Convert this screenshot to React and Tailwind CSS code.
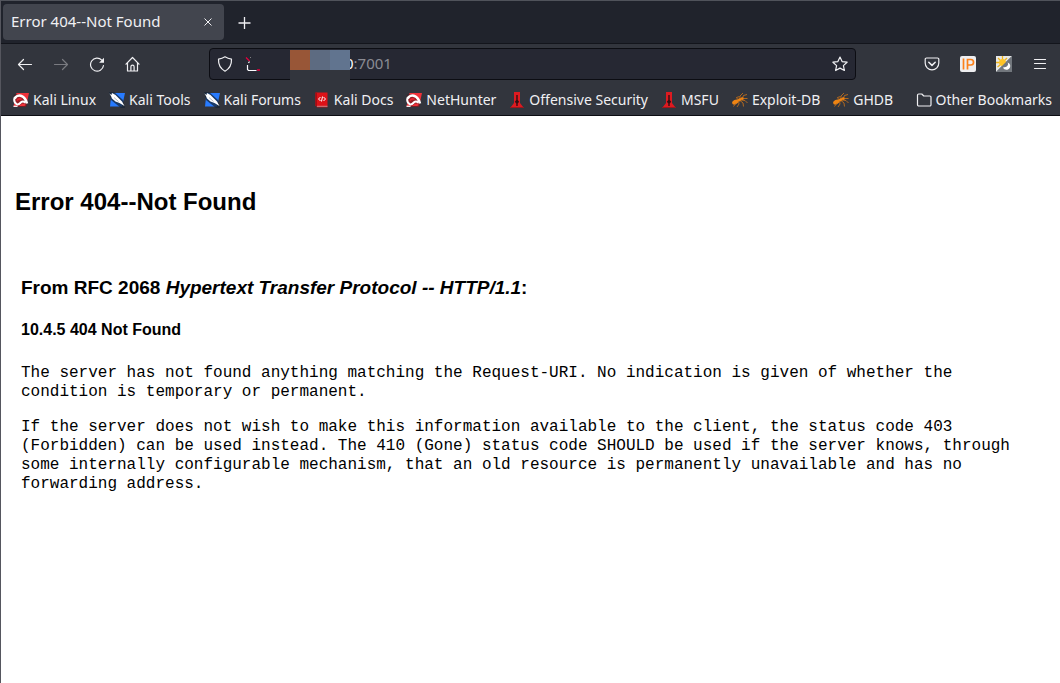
function Line({ children, className = 'size-4', box = '0 0 16 16' }) {
  return (
    <svg
      viewBox={box}
      className={className}
      fill="none"
      stroke="currentColor"
      strokeWidth="1.2"
      strokeLinecap="round"
      strokeLinejoin="round"
      aria-hidden="true"
    >
      {children}
    </svg>
  )
}

function MagnetIcon() {
  return (
    <svg viewBox="0 0 16 16" className="size-4 shrink-0" aria-hidden="true">
      <path d="M3.500 1H16l-3 13.500H.5z" fill="#f0323a" />
      <path d="M1 2.500 6 2l7 5 1.500 5-1.500 3H5L0 10z" fill="#4a1218" opacity=".55" />
      <path d="M1.600 6.500C3 4 6 3 8.500 4c3 1.100 4.500 3.800 5.500 7.500" fill="none" stroke="#fff" strokeWidth="2.600" />
      <path d="M1.500 6C.8 8.500 1.500 11 4 12.300c1.800.8 2.800-.9 4-2 1.500-1.300 3-.8 4.300.4" fill="none" stroke="#fff" strokeWidth="2" />
      <path d="M4 8.600c1-1.600 3-2 4.600-1.200" fill="none" stroke="#e8252f" strokeWidth="1.600" />
      <path d="M5.500 14h6l1-2-3-.5z" fill="#f0323a" />
      <path d="M.5 14.300h4" stroke="#fff" strokeWidth="1.200" />
    </svg>
  )
}

function ToolIcon() {
  return (
    <svg viewBox="0 0 16 16" className="size-4 shrink-0" aria-hidden="true">
      <path d="M2.500 1H16l-3 13.500H1z" fill="#277bff" />
      <path d="M0 0h5l9 8 2 8h-4L2 8z" fill="#182536" opacity=".75" />
      <path d="M.3 1.500 2.500 3l.5-2 3.500 2 3 3 3.500 3.500 2.500 4.500-5-3-4-1.500-3.500-3-1-2.500z" fill="#fff" />
      <path d="m5 5.500 4.500 4" stroke="#8696aa" strokeWidth=".7" />
    </svg>
  )
}

function DocsIcon() {
  return (
    <svg viewBox="0 0 16 16" className="size-4 shrink-0" aria-hidden="true">
      <path d="M1.500.5h12V14h-12z" fill="#dc1218" />
      <path d="M1.500.5H3V14H1.500z" fill="#a90b12" />
      <path d="M2 14h11.500v1.500H3z" fill="#a51a20" />
      <path d="M3 14.300h10.500" stroke="#e6c8ca" strokeWidth=".6" />
      <path d="M6.500 5 4.500 7l2 2M9.500 5l2 2-2 2M8.500 4.500 7.500 9.500" fill="none" stroke="#fff" strokeWidth="1" />
    </svg>
  )
}

function SpikeIcon() {
  return (
    <svg viewBox="0 0 16 16" className="size-4 shrink-0" aria-hidden="true">
      <path d="M5 0h6v11l3.500 4.500v.5h-13v-.5L5 11z" fill="#dd1a20" />
      <path d="M7.300 3h1.400v5l1.500 1.800-1.500 1.700V14H7.300v-2.500L5.800 9.800 7.300 8z" fill="#310f12" />
      <path d="M1.500 15.500h13" stroke="#9d171c" />
    </svg>
  )
}

function AntIcon() {
  return (
    <svg viewBox="0 0 16 16" className="size-4 shrink-0" aria-hidden="true">
      <g fill="#ee8413">
        <ellipse cx="3.300" cy="10" rx="3.300" ry="2.200" transform="rotate(-25 3.300 10)" />
        <ellipse cx="7.500" cy="7.800" rx="2.300" ry="1.500" transform="rotate(-25 7.500 7.800)" />
        <circle cx="10.300" cy="6.500" r="1.500" />
      </g>
      <path
        d="M6 8 4.500 5.500l3-1M8 7V4l3-3M10.500 6l1-2.500L15 2.500M11 6.500h4.500M9 8l4 .5 2.500 2.500M8 8.500l3 2.500.5 3.500M6.500 9 7 12l-2 3M4 11l-2.500 3.500"
        fill="none"
        stroke="#cf7518"
        strokeWidth=".8"
      />
    </svg>
  )
}

const BOOKMARKS = [
  ['Kali Linux', MagnetIcon],
  ['Kali Tools', ToolIcon],
  ['Kali Forums', ToolIcon],
  ['Kali Docs', DocsIcon],
  ['NetHunter', MagnetIcon],
  ['Offensive Security', SpikeIcon],
  ['MSFU', SpikeIcon],
  ['Exploit-DB', AntIcon],
  ['GHDB', AntIcon],
]

function TabStrip() {
  return (
    <div className="flex h-11 items-center border-y border-t-[#50535b] border-b-[#13151c] bg-[#20232c] pl-0.5">
      <div className="flex h-9 w-[221px] items-center justify-between rounded bg-[#42454e] pl-2 pr-2.5">
        <span className="text-[15px]">Error 404--Not Found</span>
        <button type="button" aria-label="Close tab">
          <svg viewBox="0 0 12 12" className="size-3" fill="none" stroke="currentColor" aria-hidden="true">
            <path d="m2.500 2.500 7 7M9.500 2.500l-7 7" />
          </svg>
        </button>
      </div>
      <button type="button" aria-label="New tab" className="ml-3">
        <svg viewBox="0 0 17 17" className="size-[17px]" fill="none" stroke="currentColor" aria-hidden="true">
          <path d="M8.500 3v12M2.500 9h12" strokeWidth="1.300" />
        </svg>
      </button>
    </div>
  )
}

function AddressBar() {
  return (
    <div className="relative ml-[68px] flex h-8 min-w-0 flex-1 items-center rounded border border-[#0c0d13] bg-[#262833] px-[7px]">
      <Line>
        <path d="M8 .8c2 1.300 4 2 6.500 2.300.2 5-1.500 9.500-6.500 12.100C3 12.600 1.300 8.100 1.500 3.100 4 2.800 6 2.100 8 .8z" />
      </Line>
      <svg viewBox="0 0 16 16" className="ml-3 size-4" fill="none" aria-hidden="true">
        <path d="M4.500 5.500 3.500 7M2.500 9v4.500l1 1h8" stroke="#fbfbfe" strokeWidth="1.200" />
        <path d="M1 1.500 4.500 5M12 14h3" stroke="#e2003f" strokeWidth="1.300" />
        <path d="M5 1.500h.8" stroke="#999" />
      </svg>
      <span className="ml-[84px] text-[15px] text-[#fbfbfe]">0</span>
      <input
        type="text"
        aria-label="Address"
        defaultValue=":7001"
        className="min-w-0 flex-1 bg-transparent text-[15px] text-[#8b8c94] outline-none"
      />
      <div className="absolute left-20 top-px h-[31px] w-[60px] bg-[#32353d]">
        <div className="flex h-5">
          <span className="flex-1 bg-[#985637]" />
          <span className="flex-1 bg-[#5d6b81]" />
          <span className="flex-1 bg-[#61748f]" />
        </div>
      </div>
      <button type="button" aria-label="Bookmark this page">
        <Line><path d="m8 1 2.100 4.600 5 .6-3.700 3.400 1 4.900L8 12.100l-4.400 2.400 1-4.900L.9 6.200l5-.6z" /></Line>
      </button>
    </div>
  )
}

function NavBar() {
  return (
    <div className="flex h-10 items-center pl-4 pr-3">
      <div className="flex gap-5">
        <button type="button" aria-label="Back">
          <Line><path d="M1.500 8.500h13M6.500 3.500l-5 5 5 5" /></Line>
        </button>
        <button type="button" aria-label="Forward" disabled className="text-[#7a7b81]">
          <Line><path d="M1.500 8.500h13M9.500 3.500l5 5-5 5" /></Line>
        </button>
        <button type="button" aria-label="Reload">
          <Line>
            <path d="M14.500 9.500A6.500 6.500 0 1 1 12.800 4.200" />
            <path d="M15 1.800v4.900h-4.900z" fill="currentColor" stroke="none" />
          </Line>
        </button>
        <button type="button" aria-label="Home">
          <Line><path d="m1 8.200 6.500-6.700L14 8.200M2.500 7v8h10V7M5.900 15v-4.200a1.600 1.600 0 0 1 3.200 0V15" /></Line>
        </button>
      </div>
      <AddressBar />
      <div className="ml-[68px] flex gap-5">
        <button type="button" aria-label="Save to Pocket">
          <Line>
            <path d="M2.500 2h11a1.300 1.300 0 0 1 1.300 1.300V7a6.800 6.800 0 0 1-13.600 0V3.300A1.300 1.300 0 0 1 2.500 2z" />
            <path d="M4.800 6.300 8 9.400l3.200-3.100" strokeWidth="1.500" />
          </Line>
        </button>
        <button
          type="button"
          aria-label="IP lookup"
          className="flex size-4 items-center justify-center rounded-xs bg-[#eeeef0] text-[#fb8019]"
        >
          <svg viewBox="0 0 16 16" className="size-4" fill="none" stroke="currentColor" strokeWidth="1.700" aria-hidden="true">
            <path d="M3.500 2.500v11M7.500 13.500v-10h3.300a2.700 2.700 0 0 1 0 5.500H7.500" />
          </svg>
        </button>
        <button type="button" aria-label="Day and night mode">
          <svg viewBox="0 0 16 16" className="size-4" aria-hidden="true">
            <path d="M0 0h16v16H0z" fill="#72777d" />
            <path d="M0 0h16L0 16z" fill="#e6e8e8" />
            <circle cx="6.500" cy="6.500" r="3.500" fill="#ffc426" />
            <path d="M6.500 0v3M2 2l2 2M0 6.500h3M1.500 11 4 9M11 2 9 4" stroke="#efb51d" strokeWidth="1.300" />
            <path d="M16 0 0 16h16z" fill="#72777d" />
            <path d="M11.500 6.500c1.500 2-.2 5-4.500 5 1 2.500 4.500 3 6.300 1 1.800-2.100 1-5-1.800-6z" fill="#fff" />
          </svg>
        </button>
        <button type="button" aria-label="Open application menu">
          <Line><path d="M2.500 3.500h11M2.500 7.500h11M2.500 12.500h11" /></Line>
        </button>
      </div>
    </div>
  )
}

function BookmarksBar() {
  return (
    <nav aria-label="Bookmarks" className="flex h-8 items-center justify-between whitespace-nowrap border-b border-[#0c0d13] pl-3 pr-2">
      <div className="flex gap-[13px]">
        {BOOKMARKS.map(([label, Icon]) => (
          <a key={label} href="#" className="flex items-center gap-1">
            <Icon />
            {label}
          </a>
        ))}
      </div>
      <button type="button" className="flex items-center gap-1">
        <Line><path d="M1.500 12.800V3.200A1.200 1.200 0 0 1 2.700 2h3.100l2 2h6A1.200 1.200 0 0 1 15 5.200v7.600a1.200 1.200 0 0 1-1.200 1.200H2.700a1.200 1.200 0 0 1-1.200-1.200z" /></Line>
        Other Bookmarks
      </button>
    </nav>
  )
}

export default function App() {
  return (
    <div className="min-h-screen border-l border-[#55565e] bg-white text-black">
      <header className="bg-[#32353d] font-['Noto_Sans',sans-serif] text-sm text-[#f0f0f3]">
        <TabStrip />
        <NavBar />
        <BookmarksBar />
      </header>
      <main className="px-5 pt-[70px] font-['Liberation_Sans',Arial,sans-serif] font-bold">
        <h1 className="-ml-1.5 text-2xl">Error 404--Not Found</h1>
        <h2 className="mt-[58px] text-[19px] leading-6">
          From RFC 2068 <i>Hypertext Transfer Protocol -- HTTP/1.1</i>:
        </h2>
        <h3 className="mt-[18px] text-base">10.4.5 404 Not Found</h3>
        <div className="mt-[22px] space-y-4 font-['Liberation_Mono',monospace] text-base/[19px] font-normal">
          <p>
            The server has not found anything matching the Request-URI. No indication is given of whether the
            condition is temporary or permanent.
          </p>
          <p>
            If the server does not wish to make this information available to the client, the status code 403
            (Forbidden) can be used instead. The 410 (Gone) status code SHOULD be used if the server knows, through
            some internally configurable mechanism, that an old resource is permanently unavailable and has no
            forwarding address.
          </p>
        </div>
      </main>
    </div>
  )
}
